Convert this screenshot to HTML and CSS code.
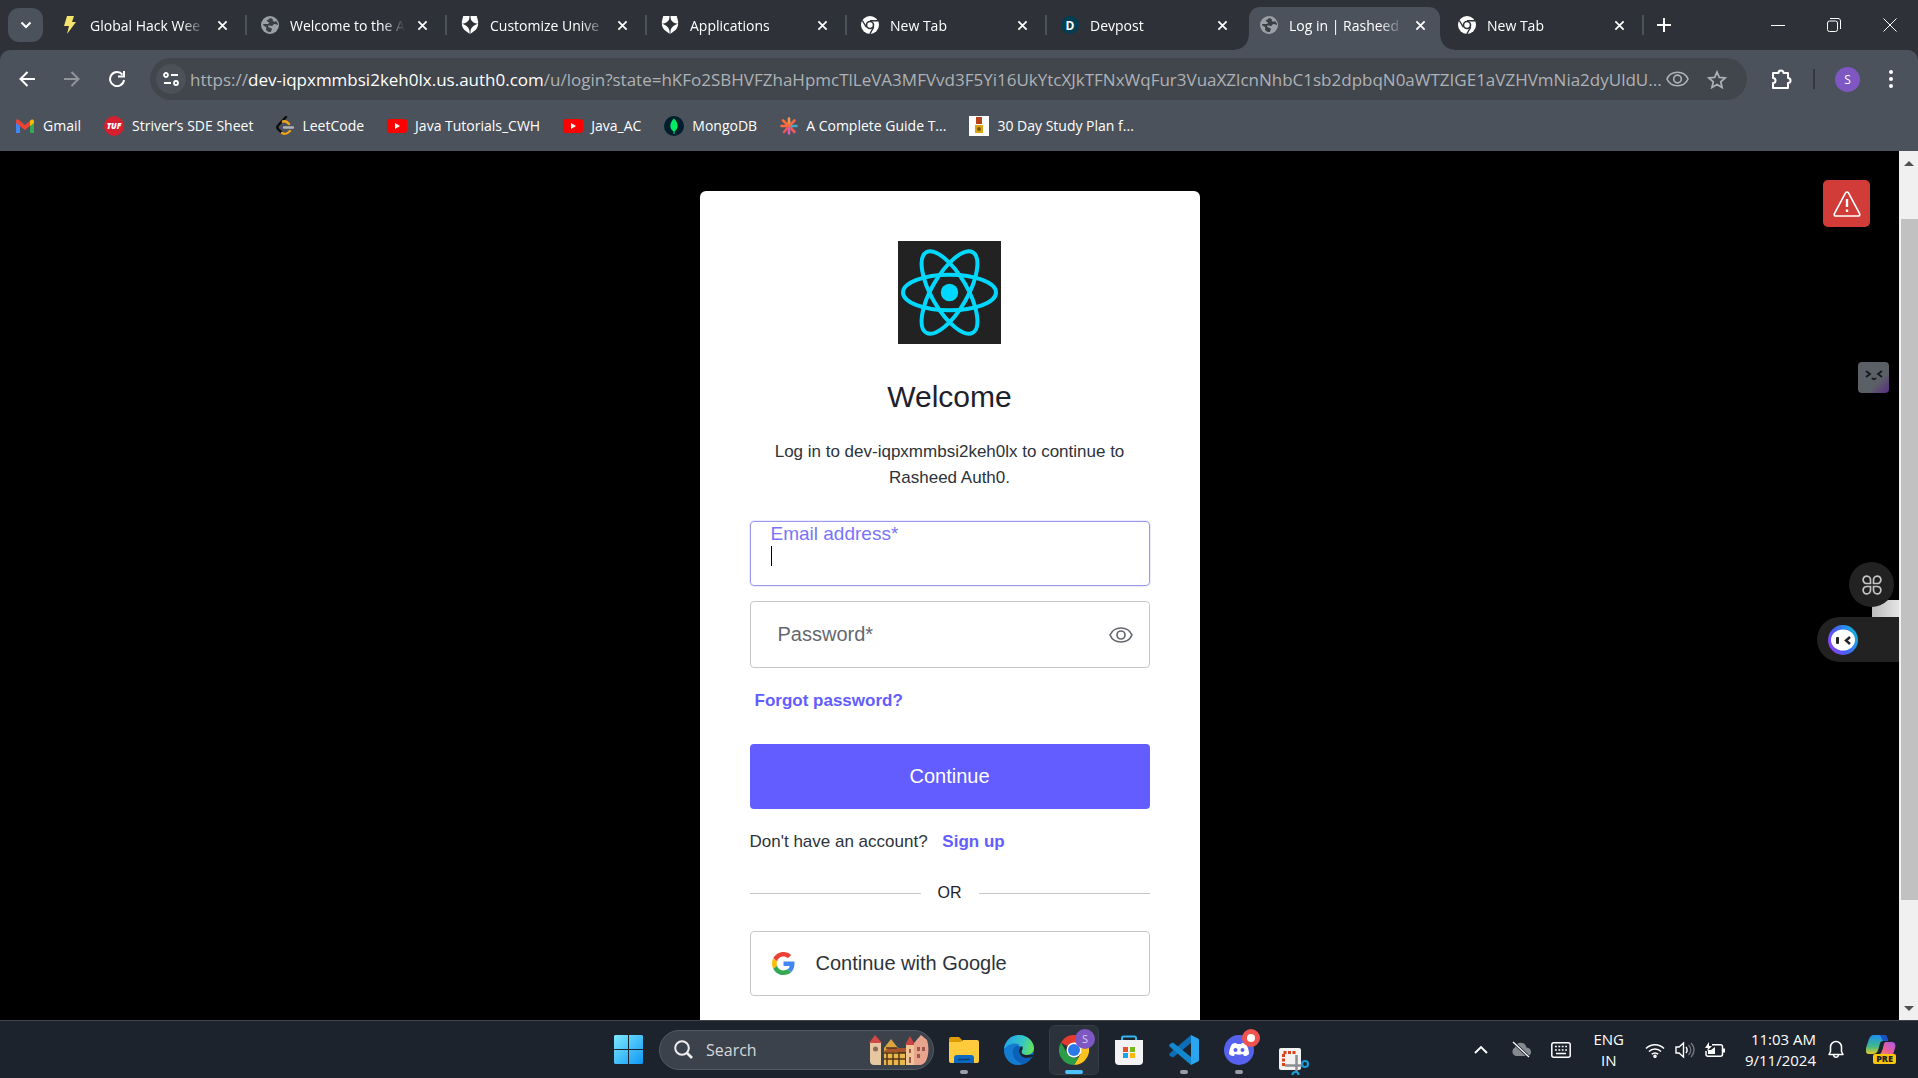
FILE: index.html
```html
<!DOCTYPE html>
<html lang="en">
<head>
<meta charset="utf-8">
<meta name="viewport" content="width=device-width, initial-scale=1">
<title>Log in | Rasheed Auth0</title>
<link rel="stylesheet" href="styles.css">
</head>
<body>
<svg class="defs" aria-hidden="true">
  <defs>
    <symbol id="x" viewBox="0 0 12 12"><path d="M1.500 1.500l9 9M10.500 1.500l-9 9" fill="none" stroke="currentColor" stroke-width="1.900"/></symbol>
    <symbol id="globe" viewBox="0 0 18 18"><circle cx="9" cy="9" r="9" fill="#9ba0a6"/><path d="M10 2c-2 0-2 2-4 2C5 6 8 5 8 7c0 1-2 1-3 1H2c0 2 2 2 3 3s-1 2 1 4c1 1 3 1 4 1 0-2 1-2 1-3-1-2-4-1-4-3 1-1 3 0 4 0s1-2 3-2c1 0 2 1 3 1 0-2-1-3-2-4-1 1-2 1-3 0s1-2-1-2z" fill="#3a3f46"/></symbol>
    <symbol id="shield" viewBox="0 0 18 20"><path d="M1.500 0h15L18 6v3c0 5-4 8-9 11C4 17 0 14 0 9V6z" fill="#fff"/><path d="M9 0c.5 5 3 8 9 8.500-5 1-8 5-9 8.500-1-3.500-4-7.500-9-8.500C6 8 8.500 5 9 0z" fill="#2e3138"/><path d="M9 0v20" stroke="#2e3138" stroke-width="1"/></symbol>
    <symbol id="chromium" viewBox="0 0 18 18"><circle cx="9" cy="9" r="9" fill="#fff"/><circle cx="9" cy="9" r="4.300" fill="#2e3138"/><circle cx="9" cy="9" r="2.700" fill="#fff"/><path d="M9 4.700h8M5.300 11.200L1.300 4.500M12.700 11.200L8.800 18" stroke="#2e3138" stroke-width="1.400"/></symbol>
    <symbol id="eye" viewBox="0 0 24 16"><path d="M1 8c2-4.500 6-7 11-7s9 2.500 11 7c-2 4.500-6 7-11 7S3 12.500 1 8z" fill="none" stroke="currentColor" stroke-width="1.700"/><circle cx="12" cy="8" r="4" fill="none" stroke="currentColor" stroke-width="1.700"/></symbol>
    <symbol id="youtube" viewBox="0 0 20 14"><rect width="20" height="14" rx="3" fill="#f00"/><path d="M8 4l5 3-5 3z" fill="#fff"/></symbol>
  </defs>
</svg>

<header class="browser">
  <div class="tabstrip">
    <button class="tab-search" aria-label="Search tabs"><svg width="12" height="8" viewBox="0 0 12 8"><path d="M1.500 1.500L6 6l4.500-4.500" fill="none" stroke="#fff" stroke-width="2"/></svg></button>
    <div class="tab"><svg class="fav" viewBox="0 0 18 18"><path d="M6 0h7l-2 6h4L6 18l2-8H3z" fill="#f6e46c"/></svg><span class="tab-title">Global Hack Wee</span><button class="tab-close" aria-label="Close tab"><svg><use href="#x"/></svg></button></div>
    <div class="tab"><svg class="fav"><use href="#globe"/></svg><span class="tab-title">Welcome to the A</span><button class="tab-close" aria-label="Close tab"><svg><use href="#x"/></svg></button></div>
    <div class="tab"><svg class="fav"><use href="#shield"/></svg><span class="tab-title">Customize Unive</span><button class="tab-close" aria-label="Close tab"><svg><use href="#x"/></svg></button></div>
    <div class="tab"><svg class="fav"><use href="#shield"/></svg><span class="tab-title">Applications</span><button class="tab-close" aria-label="Close tab"><svg><use href="#x"/></svg></button></div>
    <div class="tab"><svg class="fav"><use href="#chromium"/></svg><span class="tab-title">New Tab</span><button class="tab-close" aria-label="Close tab"><svg><use href="#x"/></svg></button></div>
    <div class="tab no-rule"><span class="fav devpost">D</span><span class="tab-title">Devpost</span><button class="tab-close" aria-label="Close tab"><svg><use href="#x"/></svg></button></div>
    <div class="tab active"><svg class="fav"><use href="#globe"/></svg><span class="tab-title">Log in | Rasheed</span><button class="tab-close" aria-label="Close tab"><svg><use href="#x"/></svg></button></div>
    <div class="tab"><svg class="fav"><use href="#chromium"/></svg><span class="tab-title">New Tab</span><button class="tab-close" aria-label="Close tab"><svg><use href="#x"/></svg></button></div>
    <button class="new-tab" aria-label="New tab"><svg width="14" height="14" viewBox="0 0 14 14"><path d="M7 0v14M0 7h14" stroke="#fff" stroke-width="2"/></svg></button>
    <div class="window-buttons">
      <button aria-label="Minimize"><svg width="14" height="14" viewBox="0 0 14 14"><path d="M0 7.500h14" stroke="#fff"/></svg></button>
      <button aria-label="Restore"><svg width="14" height="14" viewBox="0 0 14 14"><rect x=".5" y="3" width="10" height="10.500" rx="2" fill="none" stroke="#fff"/><path d="M3 .5h8c1.500 0 2.500 1 2.500 2.500v8" fill="none" stroke="#fff"/></svg></button>
      <button aria-label="Close"><svg width="14" height="14" viewBox="0 0 14 14"><path d="M.5.5l13 13M13.500.5l-13 13" stroke="#fff"/></svg></button>
    </div>
  </div>

  <div class="chrome-body">
    <div class="toolbar">
      <div class="nav">
        <button aria-label="Back"><svg width="16" height="16" viewBox="0 0 16 16"><path d="M16 8H2M8.500 1L1.500 8l7 7" fill="none" stroke="#fff" stroke-width="2"/></svg></button>
        <button aria-label="Forward"><svg width="16" height="16" viewBox="0 0 16 16"><path d="M0 8h14M7.500 1l7 7-7 7" fill="none" stroke="#90959b" stroke-width="2"/></svg></button>
        <button aria-label="Reload"><svg width="16" height="16" viewBox="0 0 16 16"><path d="M13.500 3.700A7 7 0 1 0 15 9M15 0v5.500H9" fill="none" stroke="#fff" stroke-width="2"/></svg></button>
      </div>
      <div class="omnibox">
        <button class="site-info" aria-label="Site information"><svg width="16" height="14" viewBox="0 0 16 14"><g fill="none" stroke="#fff" stroke-width="1.800"><circle cx="3" cy="3" r="2"/><path d="M8 3h7M1 11h7"/><circle cx="13" cy="11" r="2"/></g></svg></button>
        <span class="url">https://<b>dev-iqpxmmbsi2keh0lx.us.auth0.com</b>/u/login?state=hKFo2SBHVFZhaHpmcTlLeVA3MFVvd3F5Yi16UkYtcXJkTFNxWqFur3VuaXZlcnNhbC1sb2dpbqN0aWTZIGE1aVZHVmNia2dyUldU...</span>
        <button class="omni-action privacy" aria-label="Tracking protection"><svg width="23" height="16"><use href="#eye"/></svg></button>
        <button class="omni-action" aria-label="Bookmark this page"><svg width="20" height="19" viewBox="0 0 20 19"><path d="M10 2l2.300 5.400 5.900.5-4.500 3.900 1.400 5.700-5.100-3-5.100 3 1.400-5.700L1.800 7.900l5.900-.5z" fill="none" stroke="currentColor" stroke-width="1.700"/></svg></button>
      </div>
      <div class="tools">
        <button aria-label="Extensions"><svg width="22" height="22" viewBox="0 0 22 22"><path d="M2 5h5.500a2.500 2.500 0 0 1 5 0H17v5a2.500 2.500 0 0 1 0 5v5H2v-5a2.500 2.500 0 0 0 0-5z" fill="none" stroke="#fff" stroke-width="2" stroke-linejoin="round"/></svg></button>
        <span class="tool-rule"></span>
        <button class="avatar" aria-label="Profile">S</button>
        <button aria-label="Menu"><svg width="6" height="20" viewBox="0 0 6 20" fill="#fff"><circle cx="3" cy="3" r="2"/><circle cx="3" cy="10" r="2"/><circle cx="3" cy="17" r="2"/></svg></button>
      </div>
    </div>
    <nav class="bookmarks" aria-label="Bookmarks">
      <a href="#"><svg width="20" height="14" viewBox="0 0 20 14"><path d="M1 2v12h4V5z" fill="#4285f4"/><path d="M19 2v12h-4V5z" fill="#34a853"/><path d="M1 2c0-2 2-2 3-1l6 5 6-5v5l-6 5-9-7z" fill="#ea4335"/><path d="M15 2c2-2 4-2 4 1v1l-4 3z" fill="#fbbc04"/></svg><span>Gmail</span></a>
      <a href="#"><span class="tuf">TUF</span><span>Striver’s SDE Sheet</span></a>
      <a href="#"><svg width="18" height="20" viewBox="0 0 18 20" fill="none" stroke-linecap="round" stroke-width="2.400"><path d="M10 1L2 9.500c-1 1-1 2 0 3.500l4 4" stroke="#0b0b0b"/><path d="M7 5.500c3-1 4 .5 6 2.500M6 17c3 2 5 1 8-2" stroke="#f4a21b"/><path d="M8 11.500h9" stroke="#b3b3b3"/></svg><span>LeetCode</span></a>
      <a href="#"><svg width="20" height="14"><use href="#youtube"/></svg><span>Java Tutorials_CWH</span></a>
      <a href="#"><svg width="20" height="14"><use href="#youtube"/></svg><span>Java_AC</span></a>
      <a href="#"><svg width="20" height="20" viewBox="0 0 20 20"><circle cx="10" cy="10" r="10" fill="#001e2b"/><path d="M10 2.500c5 5 4.500 10 .5 13V18h-1v-2.500c-4-3-4.500-8 .5-13z" fill="#00ed64"/></svg><span>MongoDB</span></a>
      <a href="#"><svg width="18" height="18" viewBox="0 0 18 18" stroke-width="2.600" stroke-linecap="round"><path d="M9 9V1.500" stroke="#f2994a"/><path d="M9 9L3 3.500M9 9H1.500" stroke="#ff6b3d"/><path d="M9 9l-5 6" stroke="#eb5757"/><path d="M9 9v7.500" stroke="#d65db1"/><path d="M9 9l5.500 6" stroke="#ef5b5b"/><path d="M9 9h7.500" stroke="#45a6c4"/><path d="M9 9l5.500-5.500" stroke="#ef6a4b"/></svg><span>A Complete Guide T...</span></a>
      <a href="#"><svg width="20" height="20" viewBox="0 0 20 20"><path fill="#fff" d="M0 0h20v20H0z"/><path fill="#b5451c" d="M7 1h6v7H7z"/><path fill="#d9a514" d="M6 9h8v8H6z"/><circle cx="10" cy="13" r="2" fill="#7a5a0c"/></svg><span>30 Day Study Plan f...</span></a>
    </nav>
  </div>
</header>

<div class="viewport">
  <main class="page">
    <section class="card">
      <svg class="logo" viewBox="0 0 103 103" role="img" aria-label="React"><path fill="#222" d="M0 0h103v103H0z"/><circle cx="51.500" cy="51.500" r="8.700" fill="#00d8ff"/><g fill="none" stroke="#00d8ff" stroke-width="4"><ellipse cx="51.500" cy="51.500" rx="46.500" ry="17.800"/><ellipse cx="51.500" cy="51.500" rx="46.500" ry="17.800" transform="rotate(60 51.500 51.500)"/><ellipse cx="51.500" cy="51.500" rx="46.500" ry="17.800" transform="rotate(120 51.500 51.500)"/></g></svg>
      <h1>Welcome</h1>
      <p class="intro">Log in to dev-iqpxmmbsi2keh0lx to continue to Rasheed Auth0.</p>
      <form class="login">
        <div class="field focused">
          <label for="email">Email address*</label>
          <div class="entry"><span class="caret"></span><input id="email" type="email"></div>
        </div>
        <div class="field password">
          <input id="password" type="password" placeholder="Password*" aria-label="Password">
          <button type="button" aria-label="Show password"><svg width="24" height="16"><use href="#eye"/></svg></button>
        </div>
        <a class="forgot" href="#">Forgot password?</a>
        <button class="primary" type="submit">Continue</button>
        <p class="signup">Don't have an account? <a href="#">Sign up</a></p>
        <div class="divider">OR</div>
        <button class="google" type="button"><svg width="23" height="23" viewBox="0 0 48 48"><path fill="#EA4335" d="M24 9.500c3.540 0 6.710 1.220 9.210 3.600l6.850-6.850C35.900 2.380 30.470 0 24 0 14.620 0 6.510 5.380 2.560 13.220l7.980 6.190C12.430 13.720 17.740 9.500 24 9.500z"/><path fill="#4285F4" d="M46.980 24.550c0-1.570-.15-3.090-.38-4.550H24v9.020h12.940c-.58 2.960-2.260 5.480-4.780 7.180l7.730 6c4.510-4.180 7.090-10.360 7.090-17.650z"/><path fill="#FBBC05" d="M10.530 28.590c-.48-1.450-.76-2.990-.76-4.590s.27-3.140.76-4.590l-7.980-6.190C.92 16.460 0 20.120 0 24c0 3.880.92 7.540 2.560 10.780l7.970-6.190z"/><path fill="#34A853" d="M24 48c6.480 0 11.930-2.130 15.890-5.810l-7.730-6c-2.150 1.450-4.920 2.300-8.160 2.300-6.260 0-11.570-4.220-13.470-9.910l-7.980 6.190C6.510 42.620 14.620 48 24 48z"/></svg>Continue with Google</button>
      </form>
    </section>
    <button class="alert" aria-label="Warning"><svg width="28" height="26" viewBox="0 0 28 26"><path d="M12.500 1.900a1.800 1.800 0 0 1 3 0l11 20.600a1.600 1.600 0 0 1-1.500 2.500H3a1.600 1.600 0 0 1-1.500-2.500z" fill="none" stroke="#fff" stroke-width="1.600"/><path d="M14 8v8M14 18.500v2.500" stroke="#fff" stroke-width="2.400"/></svg></button>
    <button class="kaomoji" aria-label="Assistant"><svg width="18" height="10" viewBox="0 0 18 10"><path d="M1 1l4 3-4 3M17 1l-4 3 4 3M7 8c1 1.500 3 1.500 4 0" fill="none" stroke="#16181b" stroke-width="1.800"/></svg></button>
    <span class="peek"></span>
    <button class="clover" aria-label="Quick apps"><svg width="20" height="20" viewBox="0 0 20 20" fill="none" stroke="#c4c4c4" stroke-width="1.700"><path d="M8.500 8.500V5A3.700 3.700 0 1 0 5 8.500zM11.500 8.500V5A3.700 3.700 0 1 1 15 8.500zM8.500 11.500V15A3.700 3.700 0 1 1 5 11.500zM11.500 11.500V15A3.700 3.700 0 1 0 15 11.500z"/></svg></button>
    <button class="bot" aria-label="Chat assistant"><svg width="30" height="30" viewBox="0 0 30 30"><defs><linearGradient id="bg" x1="0" y1="1" x2="1" y2=".5"><stop offset="0" stop-color="#a03cf0"/><stop offset=".5" stop-color="#4b5cfa"/><stop offset="1" stop-color="#18a8e0"/></linearGradient></defs><circle cx="15" cy="15" r="15" fill="url(#bg)"/><ellipse cx="15" cy="15" rx="12" ry="10.500" fill="#fff"/><rect x="8" y="12" width="3" height="7" rx="1" fill="#222"/><path d="M22 12l-4 3.500 4 3.500" fill="none" stroke="#222" stroke-width="2.400"/></svg></button>
  </main>
  <div class="scrollbar">
    <svg width="10" height="5" viewBox="0 0 10 5"><path d="M0 5l5-5 5 5z" fill="#505050"/></svg>
    <div class="track"><div class="thumb"></div></div>
    <svg width="10" height="5" viewBox="0 0 10 5"><path d="M0 0l5 5 5-5z" fill="#505050"/></svg>
  </div>
</div>

<footer class="taskbar">
  <div class="dock">
    <button class="start" aria-label="Start"><svg width="29" height="29" viewBox="0 0 29 29"><defs><linearGradient id="win" x1="0" y1="0" x2="1" y2="1" gradientUnits="objectBoundingBox"><stop offset="0" stop-color="#7eeafe"/><stop offset="1" stop-color="#0f97f5"/></linearGradient></defs><path fill="url(#win)" d="M1 0h13v14H0V1zM15 0h13l1 1v13H15zM0 15h14v14H1l-1-1zM15 15h14v13l-1 1H15z"/></svg></button>
    <label class="search"><svg width="19" height="19" viewBox="0 0 19 19"><circle cx="8" cy="8" r="6.800" fill="none" stroke="#eee" stroke-width="2"/><path d="M13 13l5 5" stroke="#eee" stroke-width="2.600"/></svg><input type="text" placeholder="Search" aria-label="Search">
      <svg width="60" height="30" viewBox="0 0 60 30"><path fill="#e6c7a2" d="M1 8h11v22H5c-3 0-4-2-4-4z"/><path fill="#d34a44" d="M0 8L6 0l7 8z"/><circle cx="6.500" cy="14" r="2.500" fill="#8a6b58"/><path fill="#d9a441" d="M15 13l7-9 7 9v17H15z"/><path fill="#a9542a" d="M20 13h17v4H14z"/><path fill="#e8b84a" d="M15 18h21v12H15z"/><path d="M15 18h21M15 24h21M18 18v12M24 18v12M30 18v12M17 13h11" stroke="#563316" stroke-width="1.500"/><path fill="#efc596" d="M37 10h8v20h-8z"/><path fill="#c94541" d="M36 10l5-9 5 9z"/><path fill="#e9a48e" d="M45 30V8l7-8 6 5c2 6 2 15-1 21-1 2-4 4-6 4z"/><path fill="#9c584b" d="M48 12h3v4h-3zM53 12h3v4h-3zM48 19h3v4h-3zM40 14h2v4h-2zM40 22h2v6h-2z"/></svg>
    </label>
    <button class="app running" aria-label="File Explorer"><svg width="30" height="30" viewBox="0 0 30 30"><path fill="#e09b00" d="M0 4a2 2 0 0 1 2-2h8l3 3v5H0z"/><path fill="#ffcb3d" d="M0 7h12l2-2h14a2 2 0 0 1 2 2v19a2 2 0 0 1-2 2H2a2 2 0 0 1-2-2z"/><path fill="#0b69c0" d="M5 28v-5a3 3 0 0 1 3-3h14a3 3 0 0 1 3 3v5z"/><path d="M9 24.500h12" stroke="#063f78" stroke-width="1.500"/></svg></button>
    <button class="app" aria-label="Edge"><svg width="30" height="30" viewBox="0 0 30 30"><defs><linearGradient id="e1" x1="0" x2="1" y1=".3" y2=".5"><stop offset="0" stop-color="#24a4e6"/><stop offset=".6" stop-color="#35c6c9"/><stop offset="1" stop-color="#66e25a"/></linearGradient></defs><circle cx="15" cy="15" r="15" fill="#0c60b8"/><path fill="url(#e1)" d="M0 14C1 5 8 0 15 0c9 0 15 7 15 13 0 5-4 7-8 7-4 0-5-2-4-4 2-6-9-9-18-2z"/><path fill="#137bd0" d="M0 15c4-7 12-8 16-5-6 0-8 5-7 9 1 6 6 9 10 10C8 33 0 24 0 15z"/><path fill="#1c232d" d="M18 11c-5 3-3 11 4 12 3 0 6-1 7-2 1-2-2-1-5-1-5 0-8-2-6-5 1-1 1-3 0-4z"/></svg></button>
    <button class="app current" aria-label="Chrome"><svg width="30" height="30" viewBox="0 0 30 30"><path fill="#e33b2e" d="M15 15L2 7.500a15 15 0 0 1 26 0z"/><path fill="#fcc31e" d="M15 15V7.500h13A15 15 0 0 1 15 30l6.500-11z"/><path fill="#2a9d48" d="M15 30A15 15 0 0 1 2 7.500l6.500 11.300L15 22.500h4.500z"/><circle cx="15" cy="15" r="7.500" fill="#fff"/><circle cx="15" cy="15" r="6" fill="#2b78e8"/></svg><span class="badge profile">S</span></button>
    <button class="app" aria-label="Microsoft Store"><svg width="30" height="30" viewBox="0 0 30 30"><path d="M8 6V3a1.500 1.500 0 0 1 1.500-1.500h11A1.500 1.500 0 0 1 22 3v3" fill="none" stroke="#35b5ee" stroke-width="2"/><path fill="#f3f3f3" d="M1 5h28v21a4 4 0 0 1-4 4H5a4 4 0 0 1-4-4z"/><path fill="#e8502a" d="M9 12h5v5H9z"/><path fill="#78b81e" d="M16 12h5v5h-5z"/><path fill="#16a5ea" d="M9 18h5v5H9z"/><path fill="#fbb80d" d="M16 18h5v5h-5z"/></svg></button>
    <button class="app running" aria-label="Visual Studio Code"><svg width="30" height="30" viewBox="0 0 30 30"><path fill="#0d6eb6" d="M22 0v8L4 22.500 1 21c-1-1-1-2 0-3z"/><path fill="#1488cf" d="M22 30v-8L4 7.500 1 9c-1 1-1 2 0 3z"/><path fill="#2aa5ef" d="M22 0l7 3.500c1 .5 1 1 1 2v19c0 1 0 1.500-1 2L22 30z"/></svg></button>
    <button class="app running" aria-label="Discord"><svg width="30" height="30" viewBox="0 0 30 30"><circle cx="15" cy="15" r="15" fill="#5662ee"/><path fill="#fff" d="M8 9c2-1 3-1 4-1l1 1h4l1-1c1 0 3 0 4 1 2 3 3 7 3 10-2 2-4 2-5 2l-1-2c-3 1-5 1-8 0l-1 2c-1 0-3 0-5-2 0-3 1-7 3-10z"/><circle cx="11.500" cy="15" r="2" fill="#5662ee"/><circle cx="18.500" cy="15" r="2" fill="#5662ee"/></svg><span class="badge record"></span></button>
    <button class="app snip" aria-label="Snipping Tool"><svg width="31" height="27" viewBox="0 0 31 27"><rect width="22" height="22" rx="2" fill="#f4f2f1"/><path d="M4.500 18V4.500H17" fill="none" stroke="#d8431a" stroke-width="3" stroke-dasharray="3 1.500"/><path d="M17.500 7v18M6 17.500h18" stroke="#8b8f94" stroke-width="2.500"/><circle cx="26" cy="16" r="3" fill="none" stroke="#199bd8" stroke-width="2.200"/><circle cx="16.500" cy="27" r="3" fill="none" stroke="#199bd8" stroke-width="2.200"/></svg></button>
  </div>
  <div class="tray">
    <button aria-label="Show hidden icons"><svg width="14" height="9" viewBox="0 0 14 9"><path d="M1 8l6-6 6 6" fill="none" stroke="#fff" stroke-width="1.900"/></svg></button>
    <button class="onedrive" aria-label="OneDrive"><svg width="20" height="17" viewBox="0 0 20 17"><path d="M5 15a4.500 4.500 0 0 1-1-8.500C5 3 8 1 11 2c2 0 4 2 4.500 4.500C19 7 20 9 20 11s-1 4-4 4z" fill="#858a90"/><path d="M2 1l16 15" stroke="#1c232d" stroke-width="3"/><path d="M2 1l16 15" stroke="#fff" stroke-width="1.300"/></svg></button>
    <button aria-label="Touch keyboard"><svg width="20" height="16" viewBox="0 0 20 16"><rect x=".8" y=".8" width="18.400" height="14.400" rx="2" fill="none" stroke="#fff" stroke-width="1.500"/><path d="M4 4.500h12M4 8h12" stroke="#fff" stroke-width="1.700" stroke-dasharray="1.800 1.600"/><path d="M5 11.500h10" stroke="#fff" stroke-width="1.500"/></svg></button>
    <button class="lang">ENG<br>IN</button>
    <button class="status" aria-label="Network, volume and battery">
      <svg width="20" height="16" viewBox="0 0 20 16" fill="none" stroke="#fff" stroke-width="1.600"><path d="M1 6.500a12.700 12.700 0 0 1 18 0M4 9.500a8.500 8.500 0 0 1 12 0M6.800 12.300a4.500 4.500 0 0 1 6.400 0"/><circle cx="10" cy="14.300" r="1"/></svg>
      <svg width="20" height="18" viewBox="0 0 20 18" fill="none" stroke="#fff" stroke-width="1.400"><path d="M1 6v6h3l4.500 4V2L4 6zM11 6c1.500 2 1.500 4 0 6"/><path d="M13.500 4c3 3 3 7 0 10M16 2c4 4 4 10 0 14" stroke="#737980"/></svg>
      <svg width="20" height="16" viewBox="0 0 20 16"><path d="M7 2.800h8.500a2 2 0 0 1 2 2v7.500a2 2 0 0 1-2 2H3a2 2 0 0 1-2-2V9" fill="none" stroke="#fff" stroke-width="1.500"/><path d="M18 6.500h2v4h-2z" fill="#fff"/><path d="M3 8h3l4-3v7H3zM4 0L0 6h3L2 9l5-5H4z" fill="#fff"/></svg>
    </button>
    <button class="clock">11:03 AM<br>9/11/2024</button>
    <button class="bell" aria-label="Notifications"><svg width="16" height="19" viewBox="0 0 16 19"><path d="M1 14.500l1.500-3V7a5.500 5.500 0 0 1 11 0v4.500l1.500 3zM5.500 15c.5 3 4.500 3 5 0" fill="none" stroke="#fff" stroke-width="1.500" stroke-linejoin="round"/></svg></button>
    <button class="copilot" aria-label="Copilot"><svg width="30" height="20" viewBox="0 0 30 20"><defs><linearGradient id="c1" x1="0" y1="0" x2="0" y2="1"><stop offset="0" stop-color="#1b8fee"/><stop offset=".6" stop-color="#41b98a"/><stop offset="1" stop-color="#e3c927"/></linearGradient><linearGradient id="c2" x1="1" y1="0" x2="0" y2="1"><stop offset="0" stop-color="#a857ee"/><stop offset=".6" stop-color="#ef6191"/><stop offset="1" stop-color="#f59a4c"/></linearGradient></defs><path fill="url(#c1)" d="M8 0h10c3 0 3 3 4 6h-5c-3 0-3 3-4 6-1 4-2 7-6 7H3c-3 0-4-3-3-6l3-9c1-2 2-4 5-4z"/><path fill="#1951c9" d="M14 0h4c3 0 3 3 4 6h-5z"/><path fill="url(#c2)" d="M20 7h6c3 0 4 3 3 6l-2 7H12c3 0 4-4 5-7 1-4 1-6 3-6z"/></svg><span>PRE</span></button>
  </div>
</footer>
</body>
</html>
```
FILE: styles.css
```css
*, *::before, *::after { box-sizing: border-box; }

body {
  margin: 0;
  height: 100vh;
  display: flex;
  flex-direction: column;
  overflow: hidden;
  background: #000;
  color: #fff;
  font-family: "Open Sans", "Noto Sans", sans-serif;
  font-size: 14px;
}

button, input { font: inherit; color: inherit; }
button { padding: 0; border: 0; background: none; display: flex; align-items: center; justify-content: center; }
input { min-width: 0; padding: 0; border: 0; outline: 0; background: none; }
a { color: inherit; text-decoration: none; }
svg { display: block; flex: none; }
.defs { position: absolute; width: 0; height: 0; }

/* Browser tabs */
.browser { background: #2e3138; }
.tabstrip { display: flex; height: 50px; align-items: stretch; }
.tab-search { flex: none; align-self: center; width: 35px; height: 34px; margin: 0 3px 0 8px; border-radius: 11px; background: #4b525c; }
.tab { position: relative; flex: 0 1 200px; min-width: 0; display: flex; align-items: center; gap: 11px; padding: 0 18px 0 15px; }
.tab::after { content: ""; position: absolute; right: -1px; top: 15px; width: 2px; height: 20px; background: #4b525c; }
.tab.no-rule::after { display: none; }
.fav { flex: none; width: 18px; height: 18px; }
.devpost { display: grid; place-items: center; border-radius: 9px; background: #003e54; font-size: 12px; font-weight: 700; }
.tab-title { flex: 1; min-width: 0; overflow: hidden; white-space: nowrap; mask-image: linear-gradient(to right, #000 80%, transparent); }
.tab-close { flex: none; width: 12px; }
.tab-close svg { width: 11px; height: 11px; }
.tab.active { flex-basis: 191px; margin: 7px 3px 0; padding: 0 14px 7px 11px; border-radius: 11px 11px 0 0; background: #4b525c; }
.tab.active::before, .tab.active::after { content: ""; position: absolute; top: auto; bottom: 0; width: 14px; height: 14px; }
.tab.active::before { left: -14px; background: radial-gradient(circle at 0 0, #2e3138 13px, #4b525c 14px); }
.tab.active::after { right: -14px; background: radial-gradient(circle at 100% 0, #2e3138 13px, #4b525c 14px); }
.new-tab { flex: none; width: 42px; }
.window-buttons { display: flex; flex: none; margin-left: auto; }
.window-buttons button { width: 56px; }

/* Toolbar and bookmarks */
.chrome-body { background: #4b525c; border-radius: 10px 10px 0 0; }
.toolbar { display: flex; align-items: center; padding: 8px 0 0 4px; }
.nav { display: flex; flex: none; width: 146px; }
.nav button { width: 45px; height: 42px; }
.omnibox { flex: 1; min-width: 0; display: flex; align-items: center; height: 42px; padding: 0 10px 0 6px; border-radius: 21px; background: #41464c; color: #aeb2b6; }
.site-info { flex: none; width: 30px; height: 30px; margin-right: 4px; border-radius: 15px; background: #4b5158; }
.url { flex: 1; min-width: 0; overflow: hidden; white-space: nowrap; font-size: 17px; }
.url b { color: #fff; font-weight: 400; }
.omni-action { flex: none; width: 40px; height: 30px; }
.omni-action.privacy { width: 24px; margin-right: 8px; }
.tools { display: flex; flex: none; align-items: center; gap: 20px; width: 171px; padding-left: 24px; }
.tool-rule { width: 2px; height: 20px; background: #343940; }
.avatar { width: 25px; height: 25px; border-radius: 13px; background: #7e57c2; font-size: 12px; }
.tools .avatar + button { margin-left: 8px; }
.bookmarks { display: flex; align-items: center; gap: 23px; height: 51px; padding-left: 15px; white-space: nowrap; }
.bookmarks a { display: flex; align-items: center; gap: 8px; }
.tuf { width: 20px; height: 20px; border-radius: 10px; background: #d31f30; font-size: 8px; line-height: 20px; font-weight: 800; font-style: italic; text-align: center; }

/* Page area */
.viewport { flex: 1; min-height: 0; display: flex; }
.page { position: relative; flex: 1; min-width: 0; overflow: hidden; background: #000; font-family: "Liberation Sans", Arial, sans-serif; color: #1e212a; }
.card { width: 100%; max-width: 500px; margin: 40px auto; padding: 50px; border-radius: 6px; background: #fff; }
.logo { width: 103px; height: 103px; margin: 0 auto; }
h1 { margin: 33px 0 0; font-size: 30px; line-height: 40px; font-weight: 400; text-align: center; }
.intro { margin: 22px 0 30px; font-size: 17px; line-height: 26px; text-align: center; color: #2d333a; }
.login { display: flex; flex-direction: column; }
.field { border: 1px solid #c6c7ca; border-radius: 4px; }
.focused { height: 65px; padding: 0 20px; border-color: #9c98ee; box-shadow: 0 0 0 1px #eceaff; }
.focused label { display: block; font-size: 19px; line-height: 24px; color: #7a74fb; }
.entry { display: flex; }
.entry input { flex: 1; height: 20px; caret-color: transparent; }
.caret { width: 1px; height: 20px; background: #000; }
.password { display: flex; align-items: center; height: 67px; margin-top: 15px; padding: 0 16px 0 27px; color: #65676e; font-size: 20px; }
.password input { flex: 1; }
.password input::placeholder { color: #65676e; opacity: 1; }
.forgot { align-self: flex-start; margin: 20px 5px 0; font-size: 17px; line-height: 26px; font-weight: 700; color: #635dff; }
.primary { height: 65px; margin-top: 30px; border-radius: 4px; background: #635dff; color: #fff; font-size: 20px; }
.signup { margin: 20px 0 0; font-size: 17px; line-height: 26px; color: #2d333a; }
.signup a { margin-left: 10px; font-weight: 700; color: #635dff; }
.divider { display: flex; align-items: center; gap: 17px; margin: 25px 0; font-size: 16px; line-height: 26px; }
.divider::before, .divider::after { content: ""; flex: 1; height: 1px; background: #c6c7ca; }
.google { justify-content: flex-start; gap: 21px; height: 65px; padding: 0 21px; border: 1px solid #c6c7ca; border-radius: 4px; color: #2d333a; font-size: 20px; }

/* Extension widgets floating over the page */
.alert, .kaomoji, .clover, .bot, .peek { position: absolute; right: 0; }
.alert { top: 29px; right: 29px; width: 47px; height: 47px; border-radius: 5px; background: #d13c38; }
.kaomoji { top: 211px; right: 10px; width: 31px; height: 31px; padding-bottom: 6px; border-radius: 4px; background: linear-gradient(135deg, #5b5f66 65%, #5a2c86); }
.peek { top: 449px; width: 27px; height: 17px; background: linear-gradient(to right, #bdbdbd, #e4e4e4); }
.clover { top: 411px; right: 5px; width: 45px; height: 45px; border-radius: 23px; background: #222; }
.bot { top: 466px; width: 82px; height: 45px; padding-left: 11px; justify-content: flex-start; border-radius: 23px 0 0 23px; background: #222; }

.scrollbar { flex: none; display: flex; flex-direction: column; align-items: center; width: 19px; padding: 10px 0 9px; background: #f0f0f0; }
.track { flex: 1; align-self: stretch; margin: 4px 0; padding: 49px 0 0 2px; }
.thumb { height: 87%; background: #c1c1c1; }

/* Taskbar */
.taskbar { flex: none; display: grid; grid-template-columns: 1fr auto 1fr; height: 58px; border-top: 1px solid #3f454d; background: #1c232d; font-size: 15px; }
.dock { grid-column: 2; display: flex; align-items: center; padding-left: 4px; }
.start { width: 50px; margin-right: 6px; }
.search { display: flex; align-items: center; gap: 13px; width: 275px; height: 40px; margin-right: 5px; padding: 0 4px 0 14px; border: 1px solid #535a63; border-radius: 20px; background: #3b424b; font-size: 16px; }
.search input { flex: 1; }
.search input::placeholder { color: #d6d8db; opacity: 1; }
.app { position: relative; width: 50px; height: 50px; margin-right: 5px; border-radius: 6px; }
.app.current { background: #2b323c; border: 1px solid #353c46; }
.app.running::after, .app.current::after { content: ""; position: absolute; bottom: 1px; width: 8px; height: 4px; border-radius: 2px; background: #9a9ea4; }
.app.current::after { bottom: 0; width: 18px; background: #4cc2ff; }
.badge { position: absolute; top: 3px; right: 3px; width: 20px; height: 20px; border-radius: 10px; background: #7e57c2; font-size: 11px; line-height: 20px; color: #d9caf3; text-align: center; }
.badge.record { top: 4px; right: 4px; width: 18px; height: 18px; border: 5px solid #ef5350; background: #fff; }
.snip { align-items: flex-end; margin-right: 0; overflow: hidden; }
.tray { grid-column: 3; display: flex; align-items: center; justify-content: flex-end; padding-right: 22px; }
.tray > button { height: 50px; padding: 0 10px; }
.tray > .onedrive { padding-left: 13px; }
.tray > .lang, .tray > .clock { line-height: 21px; }
.tray > .lang { display: block; padding: 0 16px 0 12px; text-align: center; }
.tray > .status { gap: 10px; padding: 0 5px; }
.tray > .clock { display: block; padding: 0 0 0 15px; text-align: right; }
.tray > .bell { padding-left: 12px; }
.tray > .copilot { flex-direction: column; align-items: flex-end; padding: 0 0 0 12px; }
.copilot span { width: 23px; height: 10px; margin-top: -1px; border-radius: 2px; background: #fbc50b; color: #222; font-size: 9px; line-height: 10px; font-weight: 800; text-align: center; }
```
